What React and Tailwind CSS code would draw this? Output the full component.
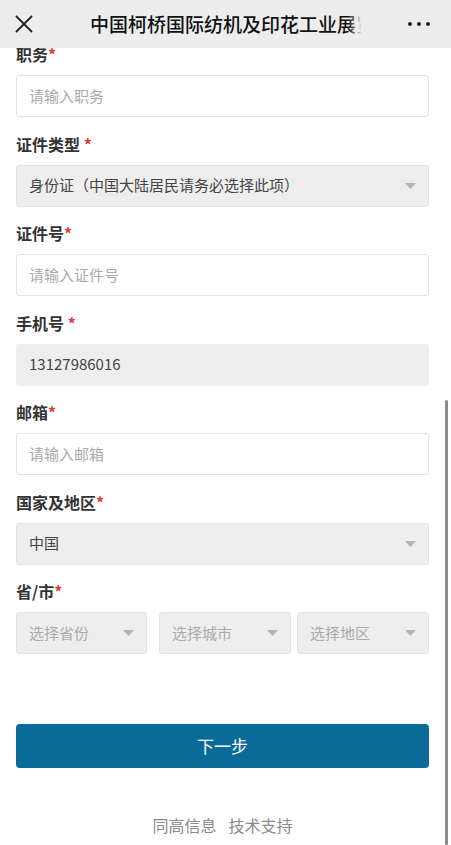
const font = { fontFamily: '"Noto Sans CJK SC", "Noto Sans", sans-serif' }

function Label({ children, spaced }) {
  return (
    <div className="h-[22px] text-[16px] leading-[22px] font-bold text-[#333]">
      {children}
      {spaced ? ' ' : ''}
      <span className="text-[#e4393c]">*</span>
    </div>
  )
}

function Arrow() {
  return (
    <svg width="11" height="6" viewBox="0 0 11 6" className="shrink-0">
      <path d="M0 0 L11 0 L5.5 6 Z" fill="#b4b4b4" />
    </svg>
  )
}

function TextInput({ placeholder }) {
  return (
    <div className="mt-[10px] h-[42px] rounded-[3px] border border-[#e3e3e3] bg-white px-[12px] flex items-center text-[15px] text-[#ababab]">
      {placeholder}
    </div>
  )
}

function Select({ value, muted, className = '' }) {
  return (
    <div
      className={
        'h-[42px] rounded-[3px] border border-[#e3e3e3] bg-[#eeeeee] pl-[12px] pr-[12px] flex items-center justify-between text-[15px] ' +
        (muted ? 'text-[#ababab] ' : 'text-[#444] ') +
        className
      }
    >
      <span className="truncate">{value}</span>
      <Arrow />
    </div>
  )
}

function Field({ label, spaced, children }) {
  return (
    <div className="mb-[15.5px]">
      <Label spaced={spaced}>{label}</Label>
      {children}
    </div>
  )
}

export default function App() {
  return (
    <div className="relative w-[451px] h-[845px] overflow-hidden bg-white" style={font}>
      <header className="relative z-10 h-12 bg-[#ededed] flex items-center">
        <svg width="18" height="18" viewBox="0 0 18 18" className="ml-[15px]">
          <path d="M1 1 L17 17 M17 1 L1 17" stroke="#222" strokeWidth="1.8" />
        </svg>
        <div className="relative ml-[57px] w-[272px] overflow-hidden whitespace-nowrap text-[19px] font-medium text-[#111]">
          中国柯桥国际纺机及印花工业展览会
          <div className="absolute right-0 top-0 h-full w-[14px] bg-gradient-to-r from-transparent to-[#ededed]" />
        </div>
        <div className="ml-auto mr-[21px] flex gap-[5px]">
          <span className="w-[4px] h-[4px] rounded-full bg-[#222]" />
          <span className="w-[4px] h-[4px] rounded-full bg-[#222]" />
          <span className="w-[4px] h-[4px] rounded-full bg-[#222]" />
        </div>
      </header>

      <main className="-mt-[5px] pl-4 pr-[22px]">
        <Field label="职务">
          <TextInput placeholder="请输入职务" />
        </Field>
        <Field label="证件类型" spaced>
          <div className="mt-[10px]">
            <Select value="身份证（中国大陆居民请务必选择此项）" />
          </div>
        </Field>
        <Field label="证件号">
          <TextInput placeholder="请输入证件号" />
        </Field>
        <Field label="手机号" spaced>
          <div className="mt-[10px] h-[42px] rounded-[3px] bg-[#eeeeee] px-[13px] flex items-center text-[15px] text-[#444]">
            13127986016
          </div>
        </Field>
        <Field label="邮箱">
          <TextInput placeholder="请输入邮箱" />
        </Field>
        <Field label="国家及地区">
          <div className="mt-[10px]">
            <Select value="中国" />
          </div>
        </Field>
        <div>
          <Label>省/市</Label>
          <div className="mt-[10px] flex">
            <Select value="选择省份" muted className="w-[131px]" />
            <Select value="选择城市" muted className="ml-[12px] w-[132px]" />
            <Select value="选择地区" muted className="ml-[6px] flex-1" />
          </div>
        </div>

        <button className="mt-[70px] w-full h-[44px] rounded-[4px] bg-[#0b6b98] text-white text-[17px]">
          下一步
        </button>

        <p className="mt-[45px] flex justify-center gap-[12px] text-[16px] text-[#8a8a8a]">
          <span>同高信息</span>
          <span>技术支持</span>
        </p>
      </main>

      <div className="absolute right-[3px] top-[400px] bottom-0 w-[3px] rounded-full bg-[#8c8c8c]" />
    </div>
  )
}
